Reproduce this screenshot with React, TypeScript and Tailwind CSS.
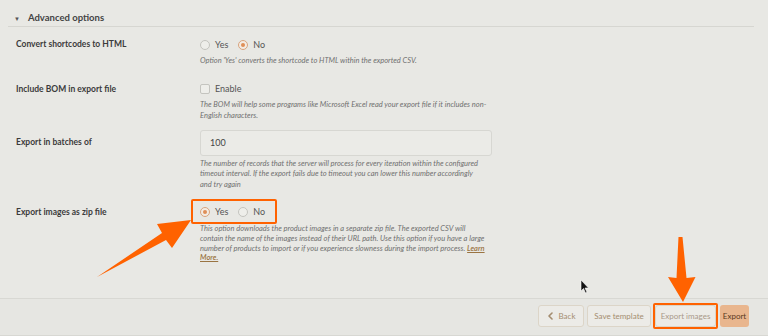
import React from 'react';

function Radio({ checked, label }: { checked?: boolean; label: string }) {
  return (
    <label className="flex items-center gap-[5px]">
      <span
        className={`flex h-[10px] w-[10px] items-center justify-center rounded-full border ${
          checked ? 'border-[#d9a47e] bg-[#f3ece4]' : 'border-[#c4c4bf] bg-[#eeeeea]'
        }`}
      >
        {checked && <span className="h-[4px] w-[4px] rounded-full bg-[#df8f58]" />}
      </span>
      <span className="text-[9px] text-[#555]">{label}</span>
    </label>
  );
}

function Help({ lines, leading = 'leading-[10.5px]' }: { lines: React.ReactNode[]; leading?: string }) {
  return (
    <div className={`whitespace-nowrap text-[7.5px] italic text-[#707070] ${leading}`}>
      {lines.map((l, i) => (
        <div key={i}>{l}</div>
      ))}
    </div>
  );
}

function Row({ label, children, className = '' }: { label: string; children: React.ReactNode; className?: string }) {
  return (
    <div className={`flex ${className}`}>
      <div className="w-[184px] shrink-0 text-[8.5px] font-bold leading-[12px] text-[#3b3b3b]">{label}</div>
      <div className="w-[292px]">{children}</div>
    </div>
  );
}

export default function App() {
  return (
    <div
      className="relative flex h-[336px] w-[768px] flex-col overflow-hidden bg-[#e8e8e4]"
      style={{ fontFamily: 'Lato, "Noto Sans", sans-serif' }}
    >
      {/* Panel */}
      <div className="flex-1 pl-2 pr-[14px] pt-[11px]">
        <div className="flex h-[16px] items-center gap-[8px] border-b border-[#d6d6d1] pb-[1px] pl-[6px]">
          <span className="text-[6px] text-[#555]">▼</span>
          <span className="text-[9.5px] font-bold text-[#444]">Advanced options</span>
        </div>

        <div className="pl-2">
          {/* Convert shortcodes */}
          <Row label="Convert shortcodes to HTML" className="mt-[11px]">
            <div className="mt-[1px] flex h-[12px] items-center gap-[10px]">
              <Radio label="Yes" />
              <Radio checked label="No" />
            </div>
            <div className="mt-[5px]">
              <Help lines={["Option 'Yes' converts the shortcode to HTML within the exported CSV."]} />
            </div>
          </Row>

          {/* BOM */}
          <Row label="Include BOM in export file" className="mt-[16px]">
            <div className="flex h-[12px] items-center gap-[5px]">
              <span className="h-[10px] w-[10px] rounded-[2px] border border-[#c4c4bf] bg-[#eeeeea]" />
              <span className="text-[9px] text-[#555]">Enable</span>
            </div>
            <div className="mt-[4px]">
              <Help
                leading="leading-[11px]"
                lines={[
                  'The BOM will help some programs like Microsoft Excel read your export file if it includes non-',
                  'English characters.',
                ]}
              />
            </div>
          </Row>

          {/* Batches */}
          <div className="mt-[9px] flex">
            <div className="flex h-[26px] w-[184px] shrink-0 items-center text-[8.5px] font-bold text-[#3b3b3b]">
              Export in batches of
            </div>
            <div className="w-[292px]">
              <div className="flex h-[26px] items-center rounded-[3px] border border-[#d7d7d2] bg-[#ebebe7] pl-[9px] text-[9px] text-[#444]">
                100
              </div>
              <div className="mt-[3px]">
                <Help
                  lines={[
                    'The number of records that the server will process for every iteration within the configured',
                    'timeout interval. If the export fails due to timeout you can lower this number accordingly',
                    'and try again',
                  ]}
                />
              </div>
            </div>
          </div>

          {/* Images zip */}
          <Row label="Export images as zip file" className="mt-[16px]">
            <div className="relative flex h-[12px] w-fit items-center gap-[10px]">
              <Radio checked label="Yes" />
              <Radio label="No" />
              <span className="pointer-events-none absolute -bottom-[6px] -left-[9px] -right-[12px] -top-[7px] rounded-[2px] border-[2.5px] border-[#ff6200]" />
            </div>
            <div className="mt-[6px]">
              <Help
                leading="leading-[9.8px]"
                lines={[
                  'This option downloads the product images in a separate zip file. The exported CSV will',
                  'contain the name of the images instead of their URL path. Use this option if you have a large',
                  <>
                    number of products to import or if you experience slowness during the import process.{' '}
                    <span className="font-semibold text-[#9a7442] underline">Learn</span>
                  </>,
                  <span className="font-semibold text-[#9a7442] underline">More.</span>,
                ]}
              />
            </div>
          </Row>
        </div>
      </div>

      {/* Footer */}
      <div className="flex h-[38px] items-start justify-end border-y border-[#d8d8d3] bg-[#e6e6e2] pr-[19px] pt-[6px]">
        <button className="flex h-[22px] w-[46px] items-center justify-center gap-[6px] rounded-[3px] border border-[#dcd5c8] bg-[#ecebe7] text-[8px] text-[#a48d70]">
          <svg width="6" height="8" viewBox="0 0 6 8" fill="none">
            <path d="M5 1L2 4l3 3" stroke="#a48d70" strokeWidth="1.6" strokeLinecap="round" strokeLinejoin="round" />
          </svg>
          Back
        </button>
        <button className="ml-[3px] h-[22px] w-[64px] rounded-[3px] border border-[#dcd5c8] bg-[#ecebe7] text-[8px] text-[#a48d70]">
          Save template
        </button>
        <div className="relative ml-[4px] flex">
          <button className="h-[22px] w-[61px] rounded-[3px] border border-[#dcd5c8] bg-[#ecebe7] text-[8px] text-[#a9998a]">
            Export images
          </button>
          <span className="pointer-events-none absolute -bottom-[2px] -left-[2px] -right-[2px] -top-[2px] rounded-[2px] border-[2.5px] border-[#ff6200]" />
        </div>
        <button className="ml-[4px] h-[22px] w-[29px] rounded-[3px] bg-[#e9b68e] text-[8px] text-[#5b3a1e]">Export</button>
      </div>

      {/* Annotation arrows and cursor */}
      <svg className="pointer-events-none absolute left-0 top-0" width="768" height="336" viewBox="0 0 768 336">
        <polygon points="97,277 162,233 157,224 191,220 172,248 166,240" fill="#ff6200" />
        <polygon points="678.5,237 682.5,237 686.5,278 695.5,277 683,302 668,277 676.5,278" fill="#ff6200" />
        <path
          d="M581 280 L581 291 L583.5 288.5 L585.5 293 L587 292.3 L585 288 L588.5 288 Z"
          fill="#111"
          stroke="#fff"
          strokeWidth="0.6"
        />
      </svg>
    </div>
  );
}
